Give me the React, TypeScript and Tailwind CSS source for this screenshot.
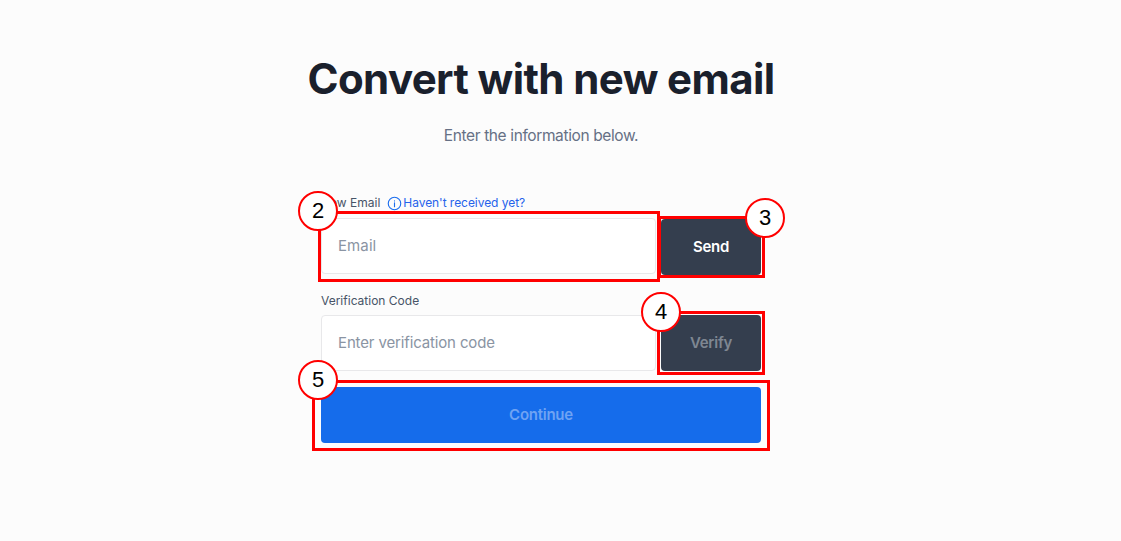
import React from "react";

function Badge({ n, className }: { n: string; className: string }) {
  return (
    <div
      className={`absolute z-20 flex h-[40px] w-[40px] items-center justify-center rounded-full border-2 border-[#ff0000] bg-white text-[22px] leading-none text-black ${className}`}
      style={{ fontFamily: '"Liberation Sans", Arial, sans-serif' }}
    >
      {n}
    </div>
  );
}

function Mark({ className }: { className: string }) {
  return <div className={`pointer-events-none absolute z-10 border-[3px] border-[#ff0000] ${className}`} />;
}

export default function App() {
  return (
    <div className="flex h-[541px] w-full flex-col items-center overflow-hidden bg-[#fcfcfc] pr-[39px] font-['Inter',sans-serif]">
      <h1 className="mt-[51px] text-[42px] font-bold leading-[56px] tracking-[-0.6px] text-[#1a202c]">Convert with new email</h1>
      <p className="mt-[15px] text-[15.5px] leading-[28px] tracking-[-0.38px] text-[#667085]">Enter the information below.</p>
      <div className="relative mt-[43px] flex w-[440px] flex-col">
        <div className="flex h-[18px] translate-y-px items-center gap-[7px] text-[12px] leading-[18px] text-[#475467]">
          <span>New Email</span>
          <span className="flex items-center gap-[1px] tracking-[-0.05px] text-[#2563eb]">
            <svg width="15" height="15" viewBox="0 0 24 24" fill="none" stroke="#1a6dee" strokeWidth="1.8" strokeLinecap="round">
              <circle cx="12" cy="12" r="10" />
              <path d="M12 11v6" />
              <path d="M12 7.5v.5" />
            </svg>
            Haven't received yet?
          </span>
        </div>
        <div className="mt-[7px] flex gap-[5px]">
          <div className="flex h-[56px] w-[335px] items-center rounded-[4px] border border-[#e8e8ea] bg-white px-[16px] text-[15px] tracking-[0.1px] text-[#8a94a3]">Email</div>
          <button className="h-[56px] w-[100px] translate-y-px rounded-[4px] bg-[#343e4e] text-[15px] font-semibold tracking-[-0.25px] text-white">Send</button>
        </div>
        <div className="mt-[17px] h-[18px] translate-y-px text-[12px] leading-[18px] text-[#475467]">Verification Code</div>
        <div className="mt-[6px] flex gap-[5px]">
          <div className="flex h-[56px] w-[335px] items-center rounded-[4px] border border-[#e8e8ea] bg-white px-[16px] text-[15px] tracking-[-0.14px] text-[#8a94a3]">Enter verification code</div>
          <button className="h-[56px] w-[100px] rounded-[4px] bg-[#343e4e] text-[15px] font-semibold tracking-[-0.25px] text-[#7f8792]">Verify</button>
        </div>
        <button className="mt-[16px] h-[56px] w-full rounded-[4px] bg-[#156ceb] text-[15px] font-semibold tracking-[-0.25px] text-[#6fa3f3]">Continue</button>
        <Mark className="left-[-3px] top-[18px] h-[71px] w-[342px]" />
        <Mark className="left-[337px] top-[23px] h-[62px] w-[107px]" />
        <Mark className="left-[336px] top-[118px] h-[64px] w-[108px]" />
        <Mark className="left-[-9px] top-[187px] h-[71px] w-[458px]" />
        <Badge n="2" className="left-[-23px] top-[-2px]" />
        <Badge n="3" className="left-[424px] top-[5px]" />
        <Badge n="4" className="left-[320px] top-[99px]" />
        <Badge n="5" className="left-[-23px] top-[167px]" />
      </div>
    </div>
  );
}
